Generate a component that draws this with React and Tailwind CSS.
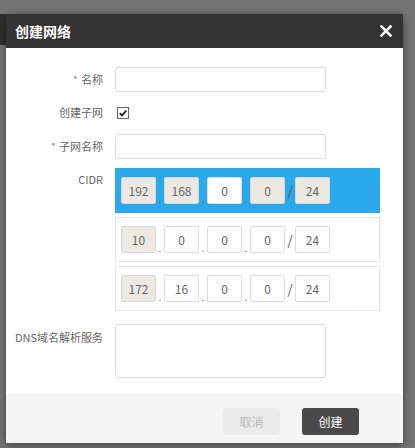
const font = { fontFamily: '"Noto Sans CJK SC", "Noto Sans", sans-serif' };

const Field = ({ label, required, children, labelClass = "items-center", labelPad = "" }) => (
  <div className={`flex ${labelClass}`}>
    <div className={`w-[97px] shrink-0 text-right text-[11px] text-[#666] whitespace-nowrap ${labelPad}`}>
      {required && <span className="text-[#999] mr-[3px]">*</span>}
      {label}
    </div>
    <div className="ml-[12px]">{children}</div>
  </div>
);

const Octet = ({ value, tone }) => {
  const toneClass =
    tone === "gray"
      ? "bg-[#ebe9e2] border-[#d9d7d0]"
      : "bg-white border-[#dcdcdc]";
  return (
    <div
      className={`w-[35px] h-[27px] border rounded-[2px] flex items-center justify-center text-[12px] text-[#666] ${toneClass}`}
    >
      {value}
    </div>
  );
};

const Dot = () => (
  <div className="w-[8px] h-[27px] flex items-end justify-center text-[10px] leading-[10px] text-[#555]">.</div>
);

const CidrRow = ({ octets, mask, active }) => (
  <div
    className={`w-[265px] h-[45px] flex items-center ${
      active ? "bg-[#2aa8ec] pl-[6px]" : "bg-white border border-[#dde8f0] pl-[5px]"
    }`}
  >
    <div className="flex items-center">
      {octets.map((o, i) => (
        <div key={i} className="flex items-center">
          {i > 0 && <Dot />}
          <Octet value={o.v} tone={o.t} />
        </div>
      ))}
      <div className="w-[10px] text-center text-[13px] text-[#555]">/</div>
      <Octet value={mask} tone={active ? "gray" : "white"} />
    </div>
  </div>
);

export default function App() {
  return (
    <div className="w-[415px] h-[448px] bg-[#747474] relative overflow-hidden" style={font}>
      {/* page behind the overlay */}
      <div className="absolute left-0 top-[14px] w-[6px] h-[31px] bg-[#2e2e2e]" />

      <div className="relative ml-[6px] mt-[14px] w-[397px] h-[429px] bg-white flex flex-col shadow-[0_2px_8px_rgba(0,0,0,0.45)]">
        {/* Header */}
        <div className="h-[34px] bg-[#333] flex items-center justify-between pl-[9px] pr-[11px]">
          <span className="text-white text-[14px] font-bold">创建网络</span>
          <svg width="12" height="12" viewBox="0 0 12 12">
            <path d="M1.5 1.5 L10.5 10.5 M10.5 1.5 L1.5 10.5" stroke="white" strokeWidth="2.6" strokeLinecap="square" />
          </svg>
        </div>

        {/* Body */}
        <div className="flex-1 flex flex-col pt-[19px]">
          <Field label="名称" required>
            <div className="w-[211px] h-[25px] border border-[#dcdcdc] rounded-[3px]" />
          </Field>

          <div className="mt-[8px] h-[25px]">
            <Field label="创建子网">
              <div className="h-[25px] flex items-center pl-[2px]">
                <div className="w-[12px] h-[12px] border border-[#666] bg-white flex items-center justify-center">
                  <svg width="10" height="10" viewBox="0 0 10 10">
                    <path d="M1.8 5.2 L4 7.4 L8.4 2.6" stroke="#222" strokeWidth="1.8" fill="none" />
                  </svg>
                </div>
              </div>
            </Field>
          </div>

          <div className="mt-[9px]">
            <Field label="子网名称" required>
              <div className="w-[211px] h-[25px] border border-[#dcdcdc] rounded-[3px]" />
            </Field>
          </div>

          <div className="mt-[9px]">
            <Field label="CIDR" labelClass="items-start" labelPad="pt-[3px]">
              <div className="flex flex-col gap-[4px]">
                <CidrRow
                  active
                  octets={[
                    { v: "192", t: "gray" },
                    { v: "168", t: "gray" },
                    { v: "0", t: "white" },
                    { v: "0", t: "gray" },
                  ]}
                  mask="24"
                />
                <CidrRow
                  octets={[
                    { v: "10", t: "gray" },
                    { v: "0", t: "white" },
                    { v: "0", t: "white" },
                    { v: "0", t: "white" },
                  ]}
                  mask="24"
                />
                <CidrRow
                  octets={[
                    { v: "172", t: "gray" },
                    { v: "16", t: "white" },
                    { v: "0", t: "white" },
                    { v: "0", t: "white" },
                  ]}
                  mask="24"
                />
              </div>
            </Field>
          </div>

          <div className="mt-[13px]">
            <Field label="DNS域名解析服务" labelClass="items-start" labelPad="pt-[5px]">
              <div className="w-[211px] h-[54px] border border-[#dcdcdc] rounded-[3px]" />
            </Field>
          </div>
        </div>

        {/* Footer */}
        <div className="h-[49px] bg-[#f4f5f5] flex justify-end items-start pt-[14px] pr-[44px] gap-[22px]">
          <button className="w-[57px] h-[27px] rounded-[3px] bg-[#ebebeb] text-[#b9b9b9] text-[12px]">取消</button>
          <button className="w-[57px] h-[27px] rounded-[3px] bg-[#4a4a4a] text-white text-[12px]">创建</button>
        </div>
      </div>
    </div>
  );
}
